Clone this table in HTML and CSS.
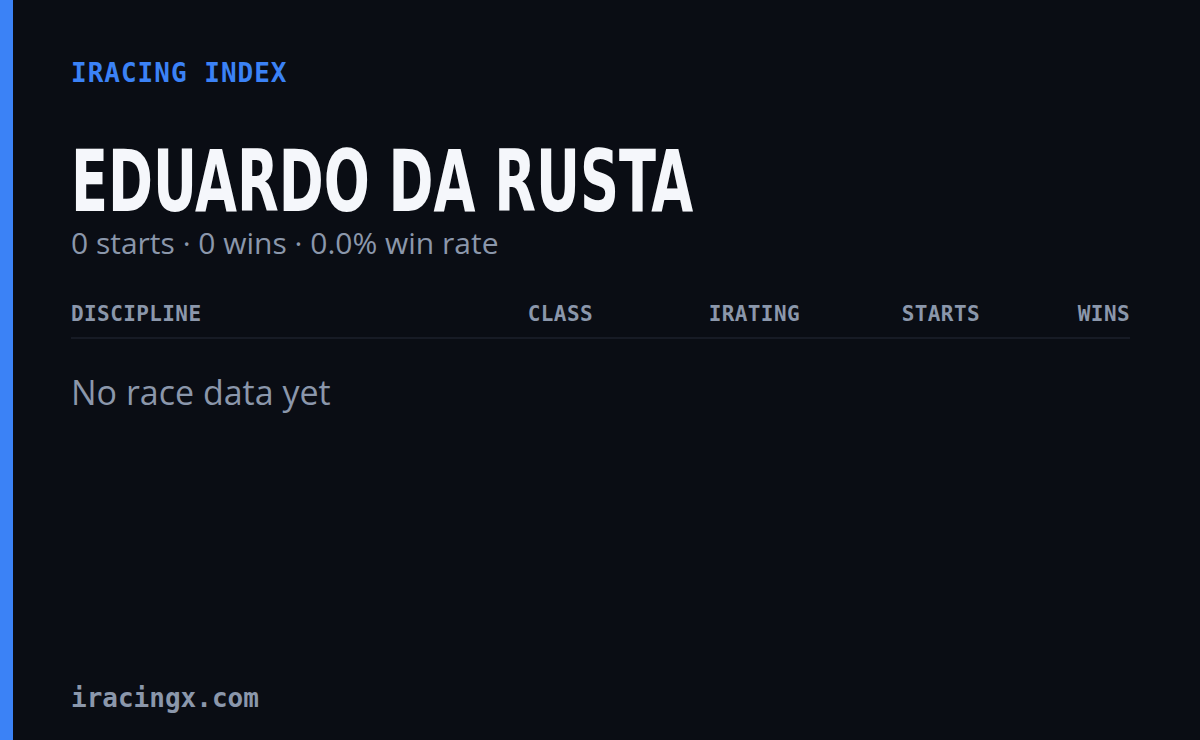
FILE: index.html
```html
<!DOCTYPE html>
<html lang="en">
<head>
<meta charset="utf-8">
<title>iRacing Index – Eduardo da Rusta</title>
<link rel="stylesheet" href="styles.css">
</head>
<body>
<div class="card">
  <div class="accent"></div>
  <main class="content">
    <div class="brand">IRACING INDEX</div>
    <h1 class="name"><span class="name-inner">EDUARDO DA RUSTA</span></h1>
    <p class="summary">0 starts · 0 wins · 0.0% win rate</p>
    <div class="table">
      <div class="thead">
        <span class="col col-discipline">DISCIPLINE</span>
        <span class="col col-class">CLASS</span>
        <span class="col col-irating">IRATING</span>
        <span class="col col-starts">STARTS</span>
        <span class="col col-wins">WINS</span>
      </div>
      <div class="empty">No race data yet</div>
    </div>
    <footer class="footer">iracingx.com</footer>
  </main>
</div>
</body>
</html>
```

FILE: styles.css
```css
html, body {
  margin: 0;
  padding: 0;
  background: #0a0d14;
}

.card {
  display: flex;
  width: 1200px;
  height: 740px;
  background: #0a0d14;
  overflow: hidden;
}

.accent {
  width: 13px;
  flex: none;
  background: #3b82f6;
}

.content {
  flex: 1;
  display: flex;
  flex-direction: column;
  padding: 56px 70px 26px 58px;
}

.brand {
  font-family: "DejaVu Sans Mono", monospace;
  font-size: 26px;
  line-height: 34px;
  letter-spacing: 1px;
  color: #3b82f6;
  font-weight: 700;
}

.name {
  margin: 51px 0 0;
  font-family: "DejaVu Sans Condensed", sans-serif;
  font-weight: 700;
  font-size: 86px;
  line-height: 80px;
  color: #f5f7fb;
  white-space: nowrap;
}

.name-inner {
  display: inline-block;
  transform: scaleX(0.7);
  transform-origin: left center;
}

.summary {
  margin: 4px 0 0;
  font-family: "Open Sans", sans-serif;
  font-size: 30px;
  line-height: 36px;
  color: #8b97ab;
}

.table {
  margin-top: 40px;
}

.thead {
  display: grid;
  grid-template-columns: 1fr 120px 207px 180px 150px;
  padding-bottom: 10px;
  border-bottom: 2px solid #171b25;
}

.col {
  font-family: "DejaVu Sans Mono", monospace;
  font-weight: 700;
  font-size: 21px;
  line-height: 26px;
  letter-spacing: 0.4px;
  color: #8b97ab;
  text-align: right;
}

.col-discipline {
  text-align: left;
}

.empty {
  margin-top: 33px;
  font-family: "Open Sans", sans-serif;
  font-size: 34px;
  line-height: 40px;
  color: #8b97ab;
}

.footer {
  margin-top: auto;
  font-family: "DejaVu Sans Mono", monospace;
  font-weight: 700;
  font-size: 26px;
  line-height: 32px;
  color: #8b97ab;
}
```
